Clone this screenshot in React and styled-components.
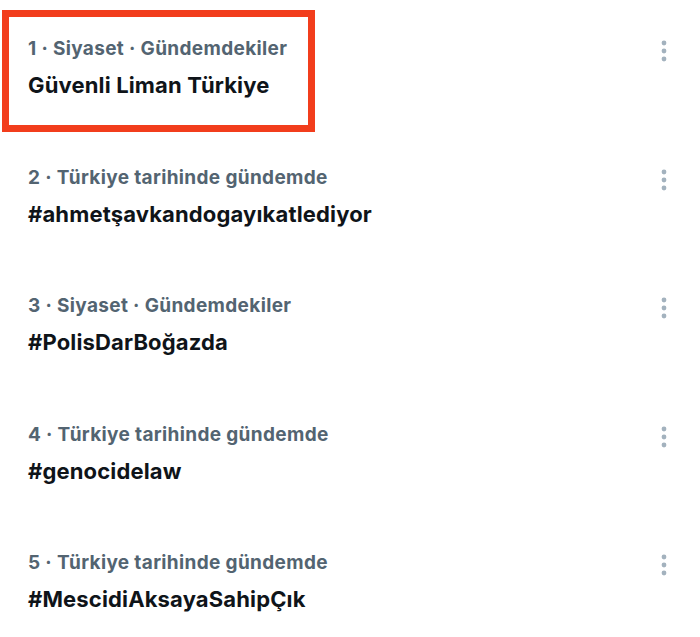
import React from "react";
import styled, { createGlobalStyle } from "styled-components";

const GlobalStyle = createGlobalStyle`
  html, body {
    margin: 0;
    padding: 0;
    background: #ffffff;
  }
  body {
    font-family: "Inter", "Liberation Sans", sans-serif;
    -webkit-font-smoothing: antialiased;
  }
`;

const List = styled.div`
  display: flex;
  flex-direction: column;
  padding-top: 10px;
`;

const Row = styled.div`
  display: flex;
  justify-content: space-between;
  align-items: flex-start;
  height: 128.5px;
  padding-left: 2px;
`;

const TextBlock = styled.div`
  box-sizing: border-box;
  width: 313px;
  height: 122px;
  border: 7px solid ${(p) => (p.$highlight ? "#f23d1c" : "transparent")};
  padding: 19px 0 0 19px;
  display: flex;
  flex-direction: column;
  gap: 10px;
  white-space: nowrap;
`;

const Meta = styled.div`
  color: #536471;
  font-size: 19px;
  font-weight: 700;
  letter-spacing: 0.35px;
  line-height: 26px;
`;

const Title = styled.div`
  color: #0f1419;
  font-size: 22px;
  font-weight: 700;
  letter-spacing: 0.15px;
  line-height: 28px;
  margin-top: -1px;
`;

const More = styled.button`
  border: 0;
  background: none;
  padding: 0;
  margin: 30px 30px 0 0;
  width: 12px;
  height: 22px;
  display: flex;
  align-items: center;
  justify-content: center;
  cursor: pointer;
`;

const trends = [
  { meta: "1 · Siyaset · Gündemdekiler", title: "Güvenli Liman Türkiye" },
  { meta: "2 · Türkiye tarihinde gündemde", title: "#ahmetşavkandogayıkatlediyor" },
  { meta: "3 · Siyaset · Gündemdekiler", title: "#PolisDarBoğazda" },
  { meta: "4 · Türkiye tarihinde gündemde", title: "#genocidelaw" },
  { meta: "5 · Türkiye tarihinde gündemde", title: "#MescidiAksayaSahipÇık" },
];

const DotsIcon = () => (
  <svg width="6" height="22" viewBox="0 0 6 22">
    <circle cx="3" cy="3" r="2.4" fill="#a3b2be" />
    <circle cx="3" cy="11" r="2.4" fill="#a3b2be" />
    <circle cx="3" cy="19" r="2.4" fill="#a3b2be" />
  </svg>
);

const App = () => {
  return (
    <React.Fragment>
      <GlobalStyle />
      <List>
        {trends.map((t, i) => (
          <Row key={t.title}>
            <TextBlock $highlight={i === 0}>
              <Meta>{t.meta}</Meta>
              <Title>{t.title}</Title>
            </TextBlock>
            <More aria-label="More">
              <DotsIcon />
            </More>
          </Row>
        ))}
      </List>
    </React.Fragment>
  );
};

export default App;
